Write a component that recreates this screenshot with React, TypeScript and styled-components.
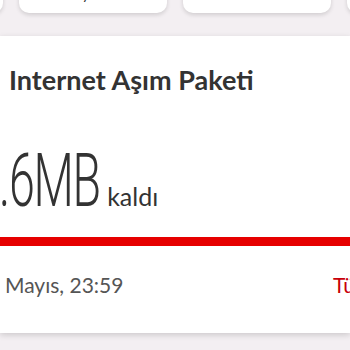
import React from "react";
import styled, { createGlobalStyle } from "styled-components";

const Global = createGlobalStyle`
  html, body { margin: 0; padding: 0; }
  body {
    width: 350px;
    height: 350px;
    overflow: hidden;
    background: #f3eff2;
    font-family: Lato, "Open Sans", sans-serif;
  }
`;

const Page = styled.div`
  width: 350px;
  height: 350px;
  overflow: hidden;
  background: #f3eff2;
`;

const Strip = styled.div`
  height: 35px;
  display: flex;
  gap: 16px;
  align-items: flex-start;
  margin-left: -145px;
`;

const ShortcutCard = styled.div`
  flex: 0 0 148px;
  height: 56px;
  margin-top: -43px;
  background: #fff;
  border-radius: 10px;
  box-shadow: 0 2px 4px rgba(0, 0, 0, 0.14);
  display: flex;
  align-items: flex-end;
  justify-content: center;
  padding-bottom: 10px;
  box-sizing: border-box;
  font-size: 14px;
  line-height: 16px;
  color: #333;
`;

const Card = styled.div`
  margin-top: 1px;
  height: 297px;
  background: #fff;
  box-shadow: 0 2px 6px rgba(0, 0, 0, 0.16);
  display: flex;
  flex-direction: column;
`;

const Title = styled.div`
  padding: 28px 0 0 9px;
  font-size: 27px;
  line-height: 32px;
  font-weight: 700;
  color: #333;
  white-space: nowrap;
`;

const Amount = styled.div`
  margin-top: 47px;
  height: 76px;
  display: flex;
  align-items: baseline;
  margin-left: -1px;
  white-space: nowrap;
`;

const Big = styled.span`
  display: inline-block;
  font-family: Roboto, sans-serif;
  font-weight: 300;
  font-size: 74px;
  line-height: 76px;
  letter-spacing: -2px;
  color: #333;
  transform: scaleX(0.63);
  transform-origin: 0 100%;
  margin-right: -60px;
`;

const Unit = styled.span`
  margin-left: 8px;
  font-size: 25px;
  color: #333;
`;

const Bar = styled.div`
  margin-top: 18px;
  height: 9px;
  background: #e60000;
`;

const Footer = styled.div`
  margin-top: 27px;
  display: flex;
  align-items: baseline;
  justify-content: space-between;
  margin-right: -40px;
  padding-left: 5px;
  white-space: nowrap;
`;

const DateText = styled.span`
  font-size: 21px;
  line-height: 24px;
  color: #555;
`;

const Link = styled.span`
  font-size: 21px;
  line-height: 24px;
  color: #c8000a;
  width: 57px;
`;

export default function App() {
  return (
    <>
      <Global />
      <Page>
        <Strip>
          <ShortcutCard />
          <ShortcutCard>Sayfa'da</ShortcutCard>
          <ShortcutCard />
          <ShortcutCard />
        </Strip>
        <Card>
          <Title>Internet Aşım Paketi</Title>
          <Amount>
            <Big>.6MB</Big>
            <Unit>kaldı</Unit>
          </Amount>
          <Bar />
          <Footer>
            <DateText>Mayıs, 23:59</DateText>
            <Link>Tümü</Link>
          </Footer>
        </Card>
      </Page>
    </>
  );
}
